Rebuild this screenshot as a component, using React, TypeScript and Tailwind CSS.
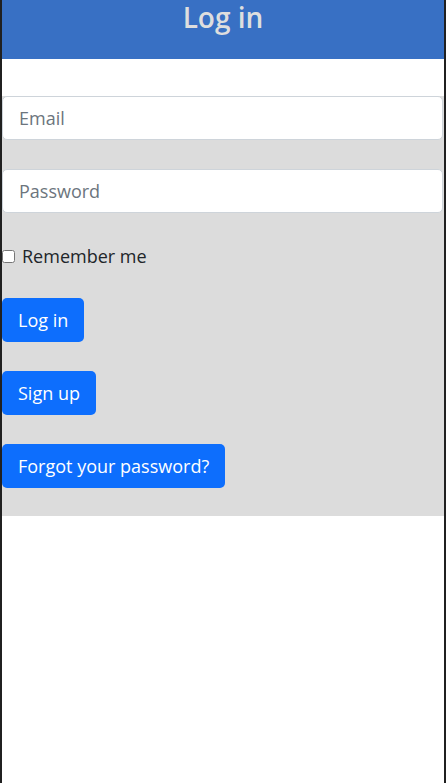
import React from 'react';

export default function App() {
  const font = { fontFamily: '"Segoe UI", "Open Sans", "Noto Sans", sans-serif' };

  return (
    <div className="min-h-[783px] bg-[#202020] px-[2px]" style={font}>
      <div className="min-h-[783px] bg-white">
        <header className="h-[59px] bg-[#3870c4] text-center">
          <h1 className="text-[28px] font-semibold leading-[34px] text-[#dedede]">Log in</h1>
        </header>

        <form className="mt-[37px] flex flex-col bg-[#dcdcdc] pb-[28px] pr-px">
          <input
            type="email"
            placeholder="Email"
            className="h-[44px] w-full rounded-[5px] border border-[#ced4da] bg-white px-4 text-[18px] text-[#212529] placeholder:text-[#6c757d] outline-none"
          />
          <input
            type="password"
            placeholder="Password"
            className="mt-[29px] h-[44px] w-full rounded-[5px] border border-[#ced4da] bg-white px-4 text-[18px] text-[#212529] placeholder:text-[#6c757d] outline-none"
          />

          <label className="mt-[31px] flex items-center gap-[7px] text-[18px] leading-[24px] text-[#212529]">
            <input type="checkbox" className="m-0 h-[13px] w-[13px]" />
            Remember me
          </label>

          <div className="mt-[30px] flex flex-col items-start gap-[29px]">
            <button type="button" className="h-[44px] rounded-[5px] bg-[#0d6efd] px-4 text-[18px] text-white">
              Log in
            </button>
            <button type="button" className="h-[44px] rounded-[5px] bg-[#0d6efd] px-4 text-[18px] text-white">
              Sign up
            </button>
            <button type="button" className="h-[44px] rounded-[5px] bg-[#0d6efd] px-4 text-[18px] text-white">
              Forgot your password?
            </button>
          </div>
        </form>
      </div>
    </div>
  );
}
